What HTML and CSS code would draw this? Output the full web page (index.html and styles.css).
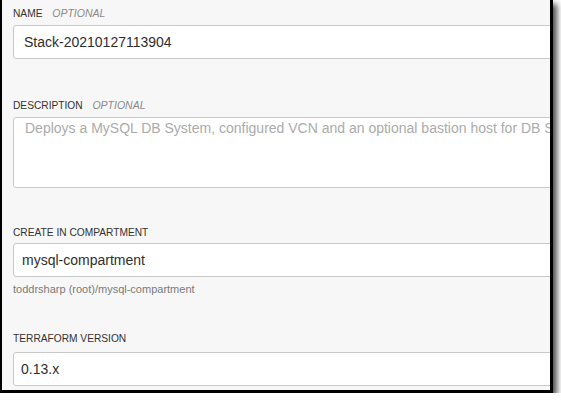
FILE: index.html
```html
<!DOCTYPE html>
<html>
<head>
<meta charset="utf-8">
<link rel="stylesheet" href="styles.css">
</head>
<body>
<div class="frame">
  <div class="field field-first">
    <div class="label">NAME <span class="opt">OPTIONAL</span></div>
    <input class="control text" type="text" value="Stack-20210127113904">
  </div>
  <div class="field field-desc">
    <div class="label">DESCRIPTION <span class="opt">OPTIONAL</span></div>
    <textarea class="control area" wrap="off" placeholder="Deploys a MySQL DB System, configured VCN and an optional bastion host for DB System access"></textarea>
  </div>
  <div class="field field-comp">
    <div class="label label-tight">CREATE IN COMPARTMENT</div>
    <div class="control select">mysql-compartment</div>
    <div class="helper">toddrsharp (root)/mysql-compartment</div>
  </div>
  <div class="field field-tf">
    <div class="label label-loose">TERRAFORM VERSION</div>
    <div class="control select select-tf">0.13.x</div>
  </div>
</div>
</body>
</html>
```
FILE: styles.css
```css
html, body {
  margin: 0;
  padding: 0;
  background: #ffffff;
}

body {
  font-family: "Liberation Sans", Arial, Helvetica, sans-serif;
}

.frame {
  box-sizing: border-box;
  width: 553px;
  height: 393px;
  border-style: solid;
  border-color: #000;
  border-width: 0 3px 3px 2px;
  background: #f7f7f7;
  overflow: hidden;
  box-shadow: 4px 4px 6px rgba(0, 0, 0, 0.7);
  padding: 7px 0 0 11px;
  display: flex;
  flex-direction: column;
}

.field {
  display: flex;
  flex-direction: column;
  align-items: flex-start;
}

.field-desc { margin-top: 40px; }
.field-comp { margin-top: 39px; }
.field-tf { margin-top: 38px; }

.label {
  font-size: 10.2px;
  line-height: 12px;
  height: 12px;
  color: #333;
  margin-bottom: 6px;
  white-space: nowrap;
}

.label-tight { margin-bottom: 4px; }
.label-loose { margin-bottom: 7px; }

.opt {
  font-style: italic;
  font-size: 10.5px;
  color: #8a8a8a;
  margin-left: 7px;
}

.control {
  box-sizing: border-box;
  width: 620px;
  flex: none;
  background: #fff;
  border: 1px solid #c9c9c9;
  border-radius: 3px;
  font-family: "Liberation Sans", Arial, Helvetica, sans-serif;
  font-size: 14px;
  color: #2e2e2e;
  margin: 0;
  outline: none;
}

.text {
  height: 34px;
  padding: 0 10px;
}

.area {
  height: 71px;
  padding: 2px 11px;
  line-height: 16px;
  resize: none;
  display: block;
  white-space: pre;
  overflow: hidden;
}

.area::placeholder {
  color: #ababab;
  opacity: 1;
  white-space: pre;
}

.select {
  height: 34px;
  line-height: 32px;
  padding: 0 8px;
  white-space: nowrap;
}

.select-tf {
  padding-left: 7px;
}

.helper {
  margin-top: 6px;
  font-size: 11px;
  line-height: 12px;
  color: #7a7a7a;
  white-space: nowrap;
}
```
